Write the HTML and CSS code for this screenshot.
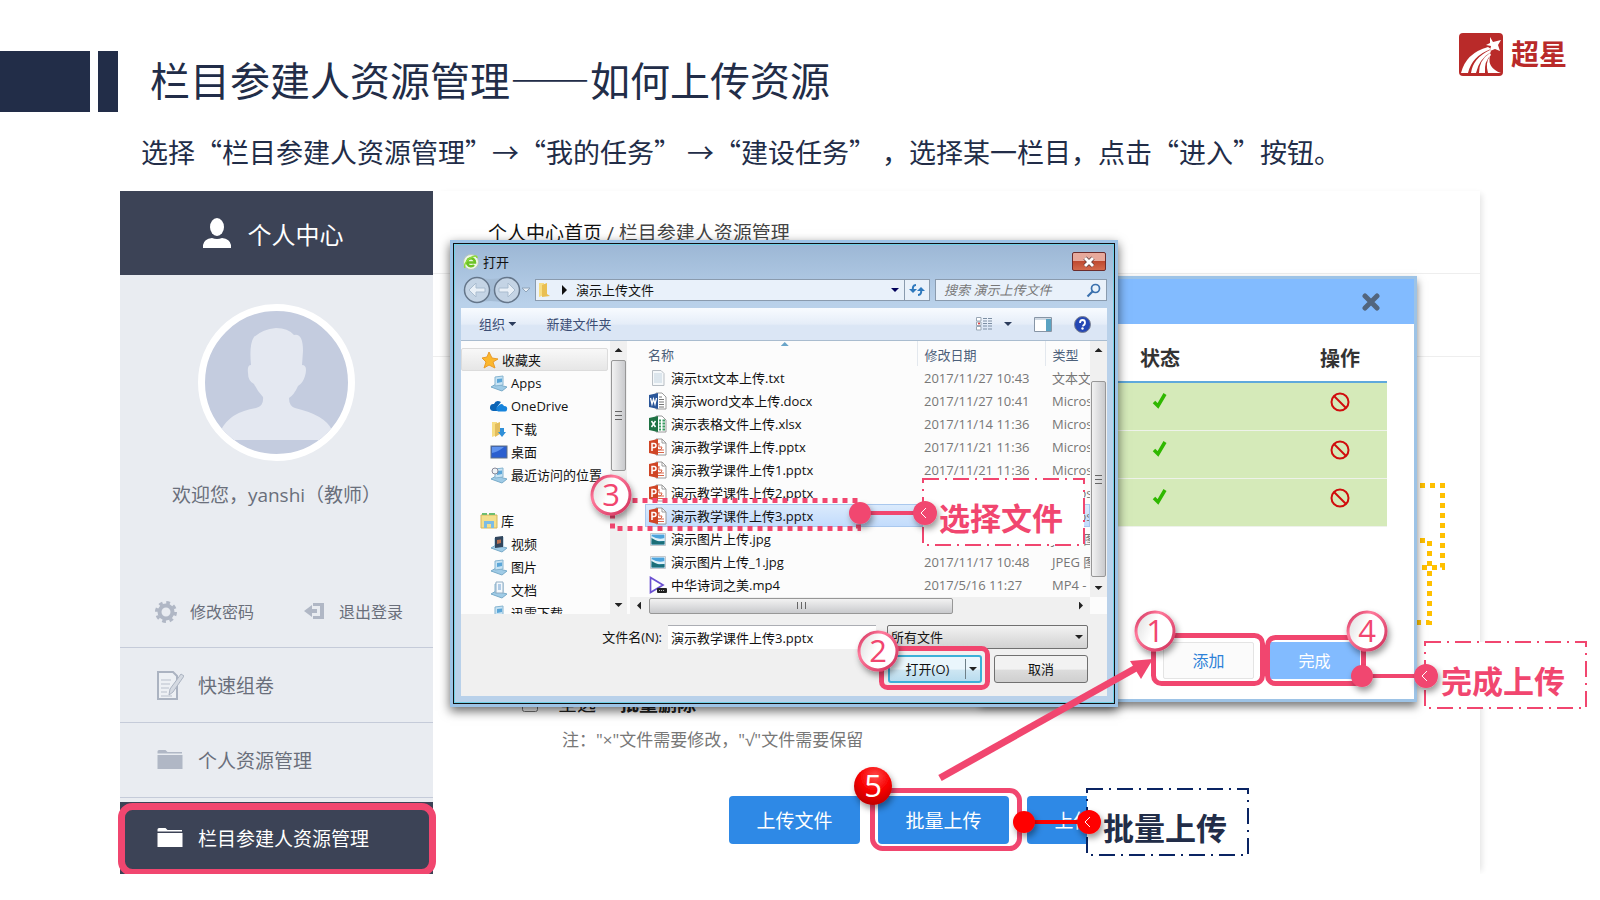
FILE: index.html
```html
<!DOCTYPE html>
<html lang="zh-CN">
<head>
  <meta charset="UTF-8" />
  <meta name="viewport" content="width=device-width, initial-scale=1.0"/>
  <title>栏目参建人资源管理——如何上传资源</title>
  <link rel="stylesheet" href="styles.css">
</head>
<body>
  <!-- shared icons -->
  <svg class="sprite" width="0" height="0" aria-hidden="true">
    <symbol id="i-folder" viewBox="0 0 26 20">
      <path d="M0 1.500Q0 0 1.500 0H8L10 2H24.500V3.500H0ZM0 5H25V19H0Z" fill="currentColor"/>
    </symbol>
    <symbol id="i-ppt" viewBox="0 0 18 18">
      <path d="M7 1H13L17 5V17H7Z" fill="#fff" stroke="#9a9a9a"/>
      <path d="M13 1V5H17" fill="none" stroke="#9a9a9a"/>
      <path d="M10 5V9H13A3 3 0 1 1 10 6M9 12H15M9 14.500H15" fill="none" stroke="#d8664a"/>
      <path d="M0 3L9 1V17L0 15Z" fill="#d04525"/>
      <path d="M3 13V5.500H5A2 2 0 0 1 5 9.500H3" fill="none" stroke="#fff" stroke-width="1.500"/>
    </symbol>
    <symbol id="i-word" viewBox="0 0 18 18">
      <path d="M7 1H13L17 5V17H7Z" fill="#fff" stroke="#9a9a9a"/>
      <path d="M10 5H13M10 7.500H15M10 10H15M10 12.500H15M10 15H15" stroke="#777"/>
      <path d="M0 3L9 1V17L0 15Z" fill="#2a5699"/>
      <path d="M1.500 6L3 12L4.500 7L6 12L7.500 6" fill="none" stroke="#fff" stroke-width="1.300"/>
    </symbol>
    <symbol id="i-excel" viewBox="0 0 18 18">
      <path d="M7 1H13L17 5V17H7Z" fill="#fff" stroke="#9a9a9a"/>
      <path d="M10 5.500H12M13.500 5.500H16M10 8.500H12M13.500 8.500H16M10 11.500H12M13.500 11.500H16M10 14.500H12M13.500 14.500H16" stroke="#3c9b63" stroke-width="2"/>
      <path d="M0 3L9 1V17L0 15Z" fill="#1f7244"/>
      <path d="M2.500 6L6.500 12M6.500 6L2.500 12" stroke="#fff" stroke-width="1.500"/>
    </symbol>
    <symbol id="i-txt" viewBox="0 0 18 18">
      <path d="M3.500 1.500H12L15 4.500V16.500H3.500Z" fill="#f5f8fa" stroke="#b8bec4"/>
      <path d="M5 5H13M5 7H13M5 9H13M5 11H13M5 13H13" stroke="#c3d3df"/>
    </symbol>
    <symbol id="i-jpg" viewBox="0 0 18 18">
      <path d="M1.500 3.500H16.500V15.500H1.500Z" fill="#fff" stroke="#c3c7cb"/>
      <path d="M2.500 4.500H15.500V14.500H2.500Z" fill="#4ba3dc"/>
      <path d="M2.500 6Q9 10 15.500 8V11H2.500Z" fill="#dff1f7"/>
      <path d="M2.500 8Q6 10 10 11.500L15.500 11V14.500H2.500Z" fill="#1c6f78"/>
    </symbol>
    <symbol id="i-mp4" viewBox="0 0 18 18">
      <path d="M1.500 1.500L14 9L1.500 16.500Z" fill="#fff" stroke="#6a4fd0" stroke-width="1.700"/>
      <rect x="8" y="12" width="10" height="5" rx="1" fill="#222"/>
      <path d="M10 14.500H16" stroke="#bbb" stroke-dasharray="1 1"/>
    </symbol>
    <symbol id="i-lib" viewBox="0 0 18 18">
      <path d="M1 13L6 10L17 13L12 17Z" fill="#9fcbe6" stroke="#79abc9"/>
      <path d="M5 3L13 2V11L5 12Z" fill="#c9e4f4" stroke="#86b4d0"/>
      <path d="M7 5L12 4.500V8L7 9Z" fill="#5ba6d8"/>
    </symbol>
  </svg>

  <header class="slide-head">
    <span class="bar bar-wide"></span>
    <span class="bar bar-thin"></span>
    <h1>栏目参建人资源管理——如何上传资源</h1>
    <div class="logo">
      <svg width="44" height="43" viewBox="0 0 44 43" aria-hidden="true">
        <rect width="44" height="43" rx="4" fill="#b92a29"/>
        <path d="M2 40Q7 20 29 14L32 16Q13 23 9 40ZM12 40Q14 25 31 17L32 19Q20 26 17 40ZM20 40Q20 27 31 20L32 22Q25 28 26 40ZM29 40Q26 30 31 23Q28 35 42 40Z" fill="#fff"/>
        <path d="M31 4L34 9L42 7L39 12L41 18L36 16L31 18L32 13L27 12L31 10Z" fill="#fff"/>
      </svg>
      <span>超星</span>
    </div>
  </header>
  <p class="intro">选择“栏目参建人资源管理”→“我的任务” →“建设任务” ，选择某一栏目，点击“进入”按钮。</p>

  <div class="stage">
    <aside class="sidebar">
      <div class="side-title">
        <svg width="30" height="30" viewBox="0 0 30 30" aria-hidden="true">
          <ellipse cx="15" cy="9" rx="7" ry="9" fill="#fff"/>
          <path d="M1 30V27Q2 21 10 20Q15 22 20 20Q28 21 29 27V30Z" fill="#fff"/>
        </svg>
        <span>个人中心</span>
      </div>
      <div class="profile">
        <svg class="avatar" viewBox="0 0 157 157" aria-hidden="true">
          <circle cx="78.500" cy="78.500" r="75" fill="#c4ccdf" stroke="#fff" stroke-width="7"/>
          <clipPath id="face"><circle cx="78.500" cy="78.500" r="71.500"/></clipPath>
          <path clip-path="url(#face)" d="M53 61Q51 40 56 33Q65 25 78 24Q90 24 96 31Q105 29 105 47L104 61Q110 61 107 72Q105 79 100 82Q96 91 91 94Q91 102 97 104Q127 111 134 126V136H23V126Q32 108 58 104Q66 102 65 93Q60 88 56 80Q50 77 50 69Q49 61 53 61Z" fill="#e4e8f1"/>
        </svg>
        <p class="welcome">欢迎您，yanshi（教师）</p>
        <div class="account">
          <a href="#">
            <svg width="22" height="22" viewBox="0 0 22 22" aria-hidden="true">
              <circle cx="11" cy="11" r="6.500" fill="none" stroke="#b0b7c5" stroke-width="4"/>
              <circle cx="11" cy="11" r="9.500" fill="none" stroke="#b0b7c5" stroke-width="3" stroke-dasharray="3.730 3.730"/>
            </svg>
            修改密码</a>
          <a href="#">
            <svg width="22" height="22" viewBox="0 0 22 22" aria-hidden="true">
              <path d="M9 5V2H20V18H9V15H16V5Z" fill="#b0b7c5"/>
              <path d="M0 10L8 4V8H13V12H8V16Z" fill="#b0b7c5"/>
            </svg>
            退出登录</a>
        </div>
      </div>
      <nav class="menu">
        <a href="#">
          <svg width="27" height="29" viewBox="0 0 27 29" aria-hidden="true">
            <path d="M1 1H16L20 5V28H1Z" fill="#edf0f4" stroke="#abb3c1" stroke-width="2"/>
            <path d="M4 9H14M4 13H13M4 17H12M4 21H10M4 25H15" stroke="#b9c0cc"/>
            <path d="M12 24L13 18L24 3L27 5L16 21Z" fill="#d5dae2" stroke="#abb3c1"/>
          </svg>
          快速组卷</a>
        <a href="#"><svg width="27" height="20" aria-hidden="true"><use href="#i-folder"/></svg>个人资源管理</a>
        <a href="#" class="active"><svg width="27" height="20" aria-hidden="true"><use href="#i-folder"/></svg>栏目参建人资源管理</a>
      </nav>
    </aside>

    <main class="main">
      <div class="crumb"><a href="#">个人中心首页</a> / 栏目参建人资源管理</div>
      <div class="strip"></div>
      <div class="actions">
        <div class="select-all">
          <label><input type="checkbox"> 全选</label>
          <b>批量删除</b>
        </div>
        <p class="note">注："×"文件需要修改，"√"文件需要保留</p>
        <div class="buttons">
          <button>上传文件</button>
          <button>批量上传</button>
          <button>上传资源</button>
        </div>
      </div>
    </main>

    <svg class="canvas" width="1480" height="709" viewBox="120 191 1480 709" aria-hidden="true">
      <g fill="none" stroke="#ffc000" stroke-width="5" stroke-dasharray="5 5">
        <path d="M1410 485.500H1442.500V567.500H1420"/>
        <path d="M1410 540.500H1429.500V622.500H1414"/>
      </g>
    </svg>

    <!-- upload list window -->
    <section class="upload">
      <div class="upload-head">
        <button aria-label="关闭">
          <svg width="18" height="18" viewBox="0 0 18 18"><path d="M3 3L15 15M15 3L3 15" stroke="#52657d" stroke-width="5" stroke-linecap="round"/></svg>
        </button>
      </div>
      <table class="upload-list">
        <thead>
          <tr><th>状态</th><th>操作</th></tr>
        </thead>
        <tbody></tbody>
      </table>
      <div class="upload-foot">
        <button class="add">添加</button>
        <button class="done">完成</button>
      </div>
    </section>

    <!-- file open window -->
    <section class="picker">
      <div class="frame">
        <div class="titlebar">
          <svg width="16" height="16" viewBox="0 0 16 16" aria-hidden="true">
            <circle cx="8" cy="8" r="7.500" fill="#eef7e4" stroke="#b9c6bd"/>
            <path d="M4 8.500H12A4 4 0 1 0 11 11" fill="none" stroke="#6cc224" stroke-width="2.500"/>
            <path d="M2 14Q0 10 7 4Q14 0 14 4" fill="none" stroke="#8fdb3c" stroke-width="1.500"/>
          </svg>
          <span>打开</span>
          <button class="close" aria-label="关闭">
            <svg width="14" height="12" viewBox="0 0 14 12"><path d="M3 2L11 10M11 2L3 10" stroke="#5d3a3a" stroke-width="4.500"/><path d="M3 2L11 10M11 2L3 10" stroke="#fff" stroke-width="3"/></svg>
          </button>
        </div>
        <div class="navbar">
          <svg width="70" height="28" viewBox="0 0 70 28" aria-hidden="true">
            <path d="M14 1Q30 5 44 1V27Q30 23 14 27Z" fill="#a4bcd5"/>
            <circle cx="16" cy="14" r="12.500" fill="#c4d4e5" stroke="#65768a" stroke-width="1.500"/>
            <circle cx="46" cy="14" r="12.500" fill="#c4d4e5" stroke="#65768a" stroke-width="1.500"/>
            <path d="M8 14L15 7V12H24V16H15V21Z" fill="#e9f0f7" stroke="#a9bccf"/>
            <path d="M54 14L47 7V12H38V16H47V21Z" fill="#e9f0f7" stroke="#a9bccf"/>
            <path d="M61 12H69L65 16Z" fill="#e9f0f7" stroke="#8fa4ba"/>
          </svg>
          <div class="address">
            <svg width="40" height="18" viewBox="0 0 40 18" aria-hidden="true">
              <path d="M3 2H8V14L3 16Z" fill="#f7dd83"/><path d="M6 4L11 2V13L14 15L6 16Z" fill="#e9bf52"/>
              <path d="M26 4L31 9L26 14Z" fill="#111"/>
            </svg>
            <span>演示上传文件</span>
            <i class="down navy"></i>
          </div>
          <button class="refresh" aria-label="刷新">
            <svg width="16" height="14" viewBox="0 0 16 14"><path d="M7 2Q3 2 4 8M9 12Q13 12 12 6" fill="none" stroke="#2f79bd" stroke-width="2"/><path d="M0 6H8L4 10ZM8 8H16L12 4Z" fill="#2f79bd"/></svg>
          </button>
          <div class="search">
            <input type="text" placeholder="搜索 演示上传文件" aria-label="搜索">
            <svg width="15" height="15" viewBox="0 0 15 15" aria-hidden="true"><circle cx="9.500" cy="5.500" r="4" fill="#e8f2fb" stroke="#3a70ad" stroke-width="1.700"/><path d="M6.500 8.500L1.500 13.500" stroke="#3a70ad" stroke-width="2.200"/></svg>
          </div>
        </div>
        <div class="toolbar">
          <button>组织 <i class="down"></i></button>
          <button>新建文件夹</button>
          <span class="views">
            <svg width="17" height="14" viewBox="0 0 17 14" aria-hidden="true"><path d="M.5.500H5V4H.5ZM.5 5H5V8.500H.5ZM.5 9.500H5V13H.5Z" fill="#fff" stroke="#9aa7b5"/><circle cx="3" cy="6.500" r="1" fill="#d33"/><path d="M7 1.500H16M7 4H16M7 6.500H16M7 9H16M7 12H16" stroke="#7c8ea3" stroke-dasharray="4 1"/></svg>
            <i class="down"></i>
            <svg class="pane" width="18" height="15" viewBox="0 0 18 15" aria-hidden="true"><path d="M.5.500H17.500V14.500H.5Z" fill="#fff" stroke="#8795a5"/><path d="M1 1H17V3H1Z" fill="#cfd9e4"/><path d="M12 2H17V14H12Z" fill="#5ba3c2"/></svg>
            <svg width="17" height="17" viewBox="0 0 17 17" aria-hidden="true"><circle cx="8.500" cy="8.500" r="8" fill="#2547b4" stroke="#7b8190"/><path d="M6 7Q6 4 8.500 4T11 6.500T8.500 10" fill="none" stroke="#fff" stroke-width="1.800"/><circle cx="8.500" cy="12.500" r="1.200" fill="#fff"/></svg>
          </span>
        </div>
        <div class="browse">
          <ul class="places">
            <li class="group current"><svg viewBox="0 0 18 18"><path d="M8 1L11 7L17 8L12 11L14 17L8 14L3 17L5 11L1 7L6 6Z" fill="#fcb72c" stroke="#e99b2a"/></svg>收藏夹</li>
            <li><svg viewBox="0 0 18 18"><use href="#i-lib"/></svg>Apps</li>
            <li><svg viewBox="0 0 18 18"><path d="M3 14A3.500 3.500 0 0 1 4 7Q6 2 11 5L7 10V14Z" fill="#0a63b5"/><path d="M8 14.500A3 3 0 0 1 8 9Q12 5 14 9Q18 9 17 13Q16.500 14.500 15 14.500Z" fill="#1583dc"/></svg>OneDrive</li>
            <li><svg viewBox="0 0 18 18"><path d="M2 2H7V15L2 17Z" fill="#f7dd83"/><path d="M5 4L10 2V14L5 17Z" fill="#e3bd5c"/><path d="M10 8H14V12H16L12 17L8 12H10Z" fill="#2f8fd8"/></svg>下载</li>
            <li><svg viewBox="0 0 18 18"><rect x="1" y="3" width="16" height="12" fill="#2b5fcf" stroke="#607084"/><path d="M2 10Q8 9 14 4H2Z" fill="#5f93ee"/></svg>桌面</li>
            <li><svg viewBox="0 0 18 18"><use href="#i-lib"/><circle cx="5" cy="5" r="3" fill="#eef2f5" stroke="#889"/></svg>最近访问的位置</li>
            <li class="group spaced"><svg viewBox="0 0 18 18"><path d="M1 3H17V16H1Z" fill="#f4df8c" stroke="#d5b75b"/><path d="M2 2H7M9 2H15" stroke="#6ebd70" stroke-width="2"/><path d="M4 9H14V16H11V12H7V16H4Z" fill="#7cbce5"/></svg>库</li>
            <li><svg viewBox="0 0 18 18"><use href="#i-lib"/><path d="M5 2L13 1V12L5 13Z" fill="#31455c"/><path d="M7 5L11 4.500V8L7 9Z" fill="#b9704f"/></svg>视频</li>
            <li><svg viewBox="0 0 18 18"><use href="#i-lib"/></svg>图片</li>
            <li><svg viewBox="0 0 18 18"><use href="#i-lib"/><path d="M6 1H13V12H6Z" fill="#f3f8fc" stroke="#92aec4"/><path d="M8 4H11M8 6H11M8 8H11" stroke="#6f9fd0"/></svg>文档</li>
            <li><svg viewBox="0 0 18 18"><use href="#i-lib"/></svg>迅雷下载</li>
          </ul>
          <div class="vbar places-bar"><i class="up"></i><span class="thumb"></span><i class="down"></i></div>
          <div class="files">
            <div class="file-clip">
              <table>
                <thead>
                  <tr><th class="name">名称<i class="up sorted"></i></th><th class="date">修改日期</th><th class="type">类型</th></tr>
                </thead>
                <tbody></tbody>
              </table>
            </div>
            <div class="hbar"><i class="left"></i><span class="thumb"></span><i class="right"></i></div>
          </div>
          <div class="vbar files-bar"><i class="up"></i><span class="thumb"></span><i class="down"></i></div>
        </div>
        <div class="picker-foot">
          <div class="row">
            <label for="fname">文件名(N):</label>
            <input id="fname" type="text" value="演示教学课件上传3.pptx">
            <span class="filter">
              <select aria-label="文件类型"><option>所有文件</option></select>
              <i class="down"></i>
            </span>
          </div>
          <div class="row">
            <button class="open"><span>打开(O)</span><i class="down"></i></button>
            <button class="cancel">取消</button>
          </div>
        </div>
      </div>
    </section>

    <!-- step marks and callouts -->
    <svg class="canvas" width="1480" height="709" viewBox="120 191 1480 709">
      <defs>
        <filter id="shade" x="-30%" y="-30%" width="170%" height="180%">
          <feDropShadow dx="2" dy="4" stdDeviation="3" flood-opacity="0.4"/>
        </filter>
        <linearGradient id="ball" x1="0" y1="0.300" x2="1" y2="0.700">
          <stop offset="0" stop-color="#e2e2e2"/><stop offset="0.450" stop-color="#fff"/>
        </linearGradient>
        <linearGradient id="ring" x1="0" y1="0" x2="1" y2="1">
          <stop offset="0" stop-color="#c8244f"/><stop offset="0.300" stop-color="#ff7a9c"/><stop offset="1" stop-color="#d0305a"/>
        </linearGradient>
        <radialGradient id="redball" cx="0.550" cy="0.250" r="0.800">
          <stop offset="0" stop-color="#ff4a4a"/><stop offset="0.500" stop-color="#f80000"/><stop offset="1" stop-color="#b80000"/>
        </radialGradient>
      </defs>

      <g fill="none" stroke="#f1466f">
        <rect x="121.500" y="806.500" width="311" height="66" rx="11" stroke-width="7"/>
        <rect x="872.500" y="790.500" width="147" height="58" rx="10" stroke-width="5"/>
        <rect x="881.500" y="648.500" width="106" height="39" rx="6" stroke-width="5"/>
        <rect x="1153.500" y="635.500" width="109" height="48" rx="8" stroke-width="5"/>
        <rect x="1267.500" y="637.500" width="96" height="46" rx="8" stroke-width="5"/>
        <rect x="612.500" y="500.500" width="246" height="28" stroke-width="5" stroke-dasharray="5 5"/>
        <path d="M940 778L1136 668" stroke-width="7"/>
      </g>
      <path d="M1153 659L1130 661L1141 679Z" fill="#f1466f"/>

      <g class="callout pink">
        <rect x="923" y="479" width="161" height="66"/>
        <path d="M860 513H925"/>
        <g filter="url(#shade)"><circle cx="860" cy="513" r="11"/><circle cx="925" cy="513" r="12"/></g>
        <path class="chev" d="M926 508L921 513L926 518"/>
        <text x="939" y="530">选择文件</text>
      </g>
      <g class="callout pink">
        <rect x="1425" y="642" width="161" height="66"/>
        <path d="M1362 676H1427"/>
        <g filter="url(#shade)"><circle cx="1362" cy="676" r="11"/><circle cx="1426" cy="676" r="12"/></g>
        <path class="chev" d="M1427 671L1422 676L1427 681"/>
        <text x="1441" y="693">完成上传</text>
      </g>
      <g class="callout navy">
        <rect x="1087" y="789" width="161" height="66"/>
        <path d="M1024 822H1089"/>
        <g filter="url(#shade)"><circle cx="1024" cy="822" r="11"/><circle cx="1089" cy="822" r="12"/></g>
        <path class="chev" d="M1090 817L1085 822L1090 827"/>
        <text x="1103" y="840">批量上传</text>
      </g>

      <g class="step" filter="url(#shade)">
        <circle cx="1155" cy="631" r="19"/><circle cx="878" cy="651" r="19"/>
        <circle cx="611" cy="495" r="19"/><circle cx="1367" cy="631" r="19"/>
        <circle class="red" cx="873" cy="786" r="19"/>
      </g>
      <g class="digit">
        <text x="1155" y="642">1</text><text x="878" y="662">2</text>
        <text x="611" y="506">3</text><text x="1367" y="642">4</text>
        <text class="white" x="873" y="797">5</text>
      </g>
    </svg>
  </div>

  <script>
    const files = [
      ["txt", "演示txt文本上传.txt", "2017/11/27 10:43", "文本文档"],
      ["word", "演示word文本上传.docx", "2017/11/27 10:41", "Microsoft Word"],
      ["excel", "演示表格文件上传.xlsx", "2017/11/14 11:36", "Microsoft Excel"],
      ["ppt", "演示教学课件上传.pptx", "2017/11/21 11:36", "Microsoft PowerPoint"],
      ["ppt", "演示教学课件上传1.pptx", "2017/11/21 11:36", "Microsoft PowerPoint"],
      ["ppt", "演示教学课件上传2.pptx", "2017/11/21 11:36", "Microsoft PowerPoint"],
      ["ppt", "演示教学课件上传3.pptx", "2017/11/21 11:36", "Microsoft PowerPoint"],
      ["jpg", "演示图片上传.jpg", "2017/11/17 10:48", "JPEG 图像"],
      ["jpg", "演示图片上传_1.jpg", "2017/11/17 10:48", "JPEG 图像"],
      ["mp4", "中华诗词之美.mp4", "2017/5/16 11:27", "MP4 - 文件"]
    ];

    document.querySelector(".files tbody").innerHTML = files.map((f, i) => `
      <tr class="${i === 6 ? "selected" : ""}">
        <td><svg width="18" height="18"><use href="#i-${f[0]}"/></svg>${f[1]}</td>
        <td>${f[2]}</td>
        <td>${f[3]}</td>
      </tr>`).join("");

    const ok = '<svg width="16" height="20" viewBox="0 0 16 20"><path d="M2 10L6 14L13 2" fill="none" stroke="#2fb800" stroke-width="3.500"/></svg>';
    const ban = '<svg width="20" height="20" viewBox="0 0 20 20"><circle cx="10" cy="10" r="8.500" fill="none" stroke="#d00d0d" stroke-width="2"/><path d="M4 4L16 16" stroke="#d00d0d" stroke-width="2"/></svg>';
    document.querySelector(".upload-list tbody").innerHTML = `<tr><td>${ok}</td><td>${ban}</td></tr>`.repeat(3);
  </script>
</body>
</html>
```
FILE: styles.css
```css
* {
  box-sizing: border-box;
}

body {
  margin: 0;
  background-color: #fff;
  color: #222d48;
  font-family: "Open Sans", "Noto Sans CJK SC", sans-serif;
  overflow-x: hidden;
}

h1, p, ul {
  margin: 0;
  padding: 0;
}

a {
  color: inherit;
  text-decoration: none;
}

button, input, select {
  font: inherit;
  color: inherit;
  border: none;
  padding: 0;
  margin: 0;
}

svg {
  display: block;
  flex: none;
}

.sprite {
  position: absolute;
}

/* slide header */
.slide-head {
  display: flex;
  align-items: flex-start;
  padding: 33px 33px 0 0;
}

.bar {
  height: 61px;
  margin-top: 18px;
  background-color: #222d48;
}

.bar-wide {
  width: 90px;
}

.bar-thin {
  width: 20px;
  margin-left: 8px;
}

h1 {
  margin: 16px 0 0 32px;
  font-family: "Noto Sans CJK SC", sans-serif;
  font-size: 40px;
  font-weight: 400;
  line-height: 61px;
}

.logo {
  display: flex;
  gap: 8px;
  margin-left: auto;
  color: #b92a29;
  font-size: 28px;
  font-weight: bold;
  line-height: 43px;
}

.intro {
  margin: 20px 0 19px 141px;
  font-family: "Noto Sans CJK SC", sans-serif;
  font-size: 27px;
  line-height: 40px;
  white-space: nowrap;
}

.stage {
  position: relative;
  display: flex;
  margin: 0 120px;
}

.canvas {
  position: absolute;
  left: 0;
  top: 0;
  overflow: visible;
  pointer-events: none;
}

/* sidebar */
.sidebar {
  width: 313px;
  background-color: #e9ecf1;
  color: #6a6f7b;
}

.side-title {
  display: flex;
  align-items: center;
  justify-content: center;
  gap: 16px;
  height: 84px;
  padding-right: 8px;
  background-color: #3c4356;
  color: #fff;
  font-size: 24px;
}

.profile {
  padding: 29px 0 23px;
  border-bottom: 1px solid #c5cbd9;
}

.avatar {
  width: 157px;
  margin: 0 auto;
}

.welcome {
  margin: 20px 0 91px;
  font-size: 19px;
  line-height: 28px;
  text-align: center;
}

.account {
  display: flex;
  justify-content: space-between;
  padding: 0 30px 0 35px;
  font-size: 16px;
  line-height: 24px;
}

.account a {
  display: flex;
  align-items: center;
  gap: 13px;
}

.menu a {
  display: flex;
  align-items: center;
  gap: 14px;
  height: 75px;
  padding-left: 37px;
  border-bottom: 1px solid #c5cbd9;
  font-size: 19px;
}

.menu svg {
  color: #b0b7c5;
}

.menu .active {
  height: 72px;
  margin-top: 4px;
  border: none;
  background-color: #3c4356;
  color: #fff;
}

.menu .active svg {
  color: #fff;
}

/* page behind the windows */
.main {
  flex: 1;
  display: flex;
  flex-direction: column;
  box-shadow: 5px 0 6px -3px #e4e4e4;
}

.crumb {
  height: 83px;
  padding-left: 55px;
  border-bottom: 1px solid #eee;
  color: #444;
  font-size: 19px;
  line-height: 84px;
}

.crumb a {
  color: #111;
}

.strip {
  height: 83px;
  border-bottom: 1px solid #eee;
}

.actions {
  margin-top: auto;
  padding: 0 0 30px 89px;
}

.select-all {
  display: flex;
  gap: 24px;
  color: #222;
  font-size: 19px;
  line-height: 28px;
}

.select-all label {
  display: flex;
  align-items: center;
  gap: 20px;
}

.select-all input {
  width: 16px;
  height: 16px;
}

.note {
  margin: 10px 0 44px 40px;
  color: #777;
  font-size: 17px;
  line-height: 24px;
}

.buttons {
  display: flex;
  gap: 18px;
  padding-left: 207px;
}

.buttons button {
  width: 131px;
  height: 48px;
  border-radius: 4px;
  background-color: #2e89e6;
  color: #fff;
  font-size: 19px;
}

/* upload list window */
.upload {
  position: absolute;
  left: 860px;
  top: 85px;
  width: 437px;
  border: 3px solid #9dc3e6;
  background-color: #fff;
  box-shadow: 0 5px 8px rgba(0, 0, 0, 0.5);
}

.upload-head {
  display: flex;
  align-items: center;
  justify-content: flex-end;
  height: 45px;
  padding-right: 34px;
  background-color: #82bbff;
}

.upload-head button {
  background: none;
}

.upload-list {
  width: 360px;
  margin-left: 44px;
  border-collapse: collapse;
  color: #333;
  font-size: 20px;
  text-align: center;
}

.upload-list th {
  height: 58px;
  padding: 9px 0 0;
  border-bottom: 2px solid #5fa9dc;
}

.upload-list th:last-child {
  width: 94px;
}

.upload-list td {
  height: 48px;
  padding: 0 0 8px;
  border-bottom: 1px solid #eef2ea;
  background-color: #d5eab9;
}

.upload-list td svg {
  margin: 0 auto;
}

.upload-foot {
  display: flex;
  justify-content: flex-end;
  gap: 15px;
  padding: 115px 54px 20px 0;
}

.upload-foot button {
  width: 91px;
  height: 37px;
  border-radius: 2px;
  font-size: 16px;
}

.add {
  border: 1px solid #e4e4e4;
  background-color: #fbfbfb;
  color: #2e82d8;
}

.done {
  background-color: #82bbff;
  color: #fff;
}

/* file open window */
.picker {
  position: absolute;
  left: 330px;
  top: 49px;
  width: 668px;
  border: 3px solid #9dc3e6;
  color: #111;
  font-size: 13px;
  line-height: 20px;
  box-shadow: 0 4px 10px rgba(0, 0, 0, 0.6);
}

.frame {
  padding: 0 7px 7px;
  border: 1px solid #111;
  background: linear-gradient(#9cb7d5, #b9d1ea 60px);
  box-shadow: inset 0 0 0 1px #6fd0e8;
}

.titlebar {
  display: flex;
  align-items: center;
  gap: 4px;
  height: 32px;
  padding: 3px 1px 0 2px;
}

.close {
  display: flex;
  align-items: center;
  justify-content: center;
  width: 34px;
  height: 19px;
  margin-left: auto;
  border: 1px solid #6b2c2c;
  border-radius: 2px;
  background: linear-gradient(#e7a99c 45%, #bf4a30 50%, #d3694c);
}

.navbar {
  display: flex;
  align-items: center;
  height: 28px;
  margin-bottom: 4px;
}

.address, .refresh, .search {
  display: flex;
  align-items: center;
  height: 22px;
  border: 1px solid #8a9bae;
  background-color: #e9f1fa;
}

.address {
  flex: 1;
  margin-left: 4px;
  padding-right: 5px;
}

.address .down {
  margin-left: auto;
}

.refresh {
  justify-content: center;
  width: 26px;
  margin-left: -1px;
}

.search {
  width: 172px;
  margin-left: 5px;
  padding: 0 5px 0 8px;
}

.search input {
  flex: 1;
  min-width: 0;
  background: none;
  font-style: italic;
}

.search input::placeholder {
  color: #777;
}

.toolbar {
  display: flex;
  align-items: center;
  gap: 27px;
  height: 33px;
  padding: 0 16px 0 18px;
  border-bottom: 1px solid #a9bccf;
  background: linear-gradient(#f8fbff, #e5edf8 50%, #dbe6f5 55%);
  color: #3b4d74;
}

.toolbar button {
  background: none;
}

.views {
  display: flex;
  align-items: center;
  gap: 11px;
  margin-left: auto;
}

.views .pane {
  margin: 0 11px 0 8px;
}

.down, .up, .left, .right {
  display: inline-block;
  flex: none;
  width: 8px;
  height: 4px;
  background-color: #222;
}

.down {
  clip-path: polygon(0 0, 100% 0, 50% 100%);
}

.up {
  clip-path: polygon(0 100%, 100% 100%, 50% 0);
}

.left, .right {
  width: 4px;
  height: 8px;
}

.left {
  clip-path: polygon(100% 0, 100% 100%, 0 50%);
}

.right {
  clip-path: polygon(0 0, 0 100%, 100% 50%);
}

.toolbar .down {
  margin: 3px 3px 3px 0;
  background-color: #2b3c5c;
}

.down.navy {
  background-color: #00005a;
}

.browse {
  display: flex;
  height: 273px;
  background-color: #fcfcfc;
}

.places {
  width: 149px;
  height: 273px;
  padding-top: 7px;
  overflow: hidden;
  list-style: none;
}

.places li {
  display: flex;
  align-items: center;
  gap: 3px;
  height: 23px;
  padding-left: 29px;
  white-space: nowrap;
}

.places svg {
  width: 18px;
  height: 18px;
}

.places .group {
  padding-left: 19px;
}

.places .current {
  margin-right: 2px;
  border: 1px solid #dcdcdc;
  border-radius: 2px;
  background: linear-gradient(#f8f8f8, #e6e6e6);
}

.places .spaced {
  margin-top: 23px;
}

.vbar {
  display: flex;
  flex-direction: column;
  align-items: center;
  width: 17px;
  padding: 7px 0;
  background-color: #f0f0f0;
}

.vbar .thumb {
  width: 15px;
  border: 1px solid #979797;
  border-radius: 2px;
  background:
    repeating-linear-gradient(#666 0 1px, transparent 1px 4px) center / 7px 9px no-repeat,
    linear-gradient(90deg, #f2f2f2, #c9cacd);
}

.vbar .down {
  margin-top: auto;
}

.places-bar .thumb {
  height: 111px;
  margin-top: 8px;
}

.files-bar {
  height: 256px;
}

.files-bar .thumb {
  height: 196px;
  margin-top: 29px;
}

.files {
  flex: 1;
  min-width: 0;
  margin-left: 3px;
}

.file-clip {
  height: 256px;
  padding-left: 15px;
  overflow: hidden;
}

.files table {
  width: 100%;
  table-layout: fixed;
  border-collapse: collapse;
}

.files th {
  height: 25px;
  padding: 3px 0 0 7px;
  border-left: 1px solid #e3e8ee;
  color: #4c607a;
  font-weight: 400;
  text-align: left;
}

.files .name {
  position: relative;
  padding-left: 3px;
  border: none;
}

.files .sorted {
  position: absolute;
  left: 50%;
  top: 1px;
  background-color: #6aa5c9;
}

.files .date {
  width: 128px;
}

.files .type {
  width: 45px;
}

.files td {
  height: 23px;
  padding: 0 0 0 7px;
  overflow: hidden;
  color: #777;
  white-space: nowrap;
}

.files td:first-child {
  display: flex;
  align-items: center;
  gap: 4px;
  padding-left: 4px;
  color: #111;
}

.files .selected {
  background: linear-gradient(#dcebfc, #c1dbfc);
  outline: 1px solid #a9c8ee;
  outline-offset: -1px;
}

.hbar {
  display: flex;
  align-items: center;
  height: 17px;
  padding: 0 7px;
  background-color: #f0f0f0;
}

.hbar .thumb {
  width: 304px;
  height: 16px;
  margin-left: 8px;
  border: 1px solid #979797;
  border-radius: 2px;
  background:
    repeating-linear-gradient(90deg, #666 0 1px, transparent 1px 4px) center / 9px 7px no-repeat,
    linear-gradient(#f2f2f2, #c9cacd);
}

.hbar .right {
  margin-left: auto;
}

.picker-foot {
  display: flex;
  flex-direction: column;
  gap: 6px;
  padding: 11px 19px 13px;
  background-color: #f0f0f0;
}

.row {
  display: flex;
  align-items: center;
  justify-content: flex-end;
}

.row label {
  margin-right: 6px;
}

.row input {
  width: 208px;
  height: 24px;
  padding-left: 3px;
  border-top: 1px solid #abadb3;
  background-color: #fff;
}

.filter {
  position: relative;
  width: 201px;
  margin-left: 11px;
}

.filter select {
  width: 100%;
  height: 24px;
  padding-left: 3px;
  border: 1px solid #707070;
  border-radius: 2px;
  background: linear-gradient(#f2f2f2, #d2d2d2);
  appearance: none;
}

.filter .down {
  position: absolute;
  right: 5px;
  top: 10px;
}

.row button {
  width: 94px;
  height: 28px;
  border: 1px solid #707070;
  border-radius: 3px;
  background: linear-gradient(#f2f2f2 50%, #dcdcdc 55%, #cfcfcf);
}

.row .open {
  display: flex;
  align-items: center;
  margin-right: 12px;
  padding-right: 3px;
  border: 2px solid #3cafd8;
  background: linear-gradient(#eaf6fc 50%, #cde6f3 55%, #b9dcee);
}

.open span {
  flex: 1;
  margin-right: 3px;
  border-right: 1px solid #6d7f88;
}

/* step marks and callouts */
.callout rect {
  fill: #fff;
  stroke-width: 2;
  stroke-dasharray: 16 6 2 6;
}

.callout path {
  fill: none;
  stroke-width: 4;
}

.callout .chev {
  stroke-width: 1;
}

.callout text {
  font-size: 31px;
  font-weight: bold;
}

.pink rect, .pink path {
  stroke: #f1466f;
}

.pink circle, .pink text {
  fill: #f1466f;
}

.callout.navy rect {
  stroke: #0a2463;
}

.callout.navy path {
  stroke: #f00;
}

.callout.navy circle {
  fill: #f00;
}

.callout.navy text {
  fill: #222d48;
}

.callout.pink .chev, .callout.navy .chev {
  stroke: #fff;
}

.step circle {
  fill: url(#ball);
  stroke: url(#ring);
  stroke-width: 3;
}

.step .red {
  fill: url(#redball);
  stroke: none;
}

.digit text {
  fill: #f1466f;
  font-size: 31px;
  text-anchor: middle;
}

.digit .white {
  fill: #fff;
}
```
